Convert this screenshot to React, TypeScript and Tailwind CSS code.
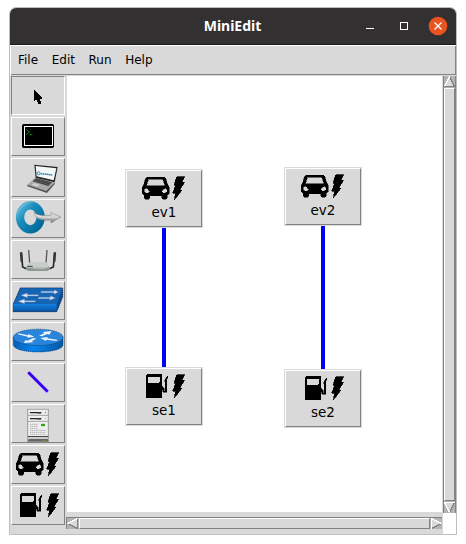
import type { ReactNode } from "react";

const raised = "border border-t-white border-l-white border-r-[#828282] border-b-[#828282]";
const sunken = "border border-t-[#828282] border-l-[#828282] border-r-white border-b-white";

function Bolt() {
  return <path d="M104 2H128L119 19H127L114 42H120L97 72L101 51H92L101 28H96Z" stroke="#000" strokeWidth="2" />;
}

function CarIcon() {
  return (
    <svg width="43" height="24" viewBox="0 0 129 72" shapeRendering="crispEdges" className="block">
      <path
        fillRule="evenodd"
        d="M16 3H66L72 9L77 27L82 34V53L76 57V66L72 70H62L59 65V59H23V65L20 70H10L6 66V57L0 53V34L5 27L10 9ZM20 9L13 29H69L62 9ZM10 37L7 41V48L12 51H19L23 47L17 38ZM72 37L75 41V48L70 51H63L59 47L65 38Z"
        stroke="#000"
        strokeWidth="1.500"
      />
      <Bolt />
    </svg>
  );
}

function PumpIcon() {
  return (
    <svg width="43" height="24" viewBox="0 0 129 72" shapeRendering="crispEdges" className="block">
      <path fillRule="evenodd" d="M16 0H57L61 4V71H12V4ZM18 9V26H51L55 22V9Z" />
      <path
        d="M60 37L66 42V52H70V30L68 20L72 11L77 6V11L74 18V55H62V47H60Z"
        stroke="#000"
        strokeWidth="1.500"
      />
      <Bolt />
    </svg>
  );
}

function Art({ dy, children }: { dy: number; children: ReactNode }) {
  return (
    <svg width="52" height="37" viewBox="1 1 52 37" className="block">
      <g transform={`translate(-11 ${dy}) scale(0.33333)`}>{children}</g>
    </svg>
  );
}

const cursor = (
  <Art dy={-6}>
    <path d="M102 60V94L109 89L115 102H123V96L118 86H126V82Z" shapeRendering="crispEdges" />
  </Art>
);

const terminal = (
  <Art dy={-47}>
    <rect x="66" y="162" width="96" height="72" rx="5" />
    <rect x="73.500" y="169.500" width="84" height="57" fill="none" stroke="#fff" strokeWidth="3" />
    <path d="M79 179L88 186L79 193M89 194H97" fill="none" stroke="#08b80c" strokeWidth="3" strokeDasharray="4 1" />
  </Art>
);

const laptop = (
  <Art dy={-3}>
    <path d="M107 67L163 82L139 110L82 89Z" fill="#a9a9a9" />
    <path d="M82 89L139 108L164 82V87L141 114L82 94Z" fill="#555" />
    <path d="M108 70L156 82L145 93L98 79Z" fill="#3c3c3c" />
    <path d="M106 73L153 85M102 77L149 89" stroke="#777" strokeWidth="1.500" />
    <path d="M101 84L119 89L113 95L95 90Z" fill="#cfcfcf" />
    <path d="M103 29L173 36L164 82L107 68Z" fill="#252525" />
    <path d="M107 33L169 40L161 76L110 64Z" fill="#f3f7fa" />
    <circle cx="116" cy="55" r="4.500" fill="none" stroke="#268bc4" strokeWidth="3" />
    <path d="M122 56L158 60" stroke="#4387ad" strokeWidth="4.500" strokeDasharray="5 1" />
  </Art>
);

const controller = (
  <Art dy={-44}>
    <defs>
      <linearGradient id="ring" x1="0" y1="0" x2="1" y2="1">
        <stop offset="0" stopColor="#5fb8d8" />
        <stop offset=".35" stopColor="#1a8dbd" />
        <stop offset="1" stopColor="#006599" />
      </linearGradient>
      <linearGradient id="silver" x1="0" y1="0" x2="0" y2="1">
        <stop offset="0" stopColor="#fafafa" />
        <stop offset=".55" stopColor="#c0c0c0" />
        <stop offset="1" stopColor="#777" />
      </linearGradient>
    </defs>
    <ellipse cx="91" cy="187" rx="31" ry="36" fill="none" stroke="url(#ring)" strokeWidth="25" />
    <path d="M53 177Q64 145 92 143" fill="none" stroke="#8dd1e6" strokeWidth="2" opacity=".8" />
    <path d="M103 169Q101 184 153 181V173L182 186L153 204V195Q101 200 103 169Z" fill="url(#silver)" stroke="#777" strokeWidth="1.500" />
    <path d="M106 178Q116 190 175 186" fill="none" stroke="#eee" strokeWidth="2" />
  </Art>
);

const router = (
  <Art dy={-5}>
    <path d="M64 52L68 96L79 101M164 52L160 96L148 101" fill="none" stroke="#292929" strokeWidth="5" />
    <path d="M63 52L65 80M165 52L163 80" stroke="#353535" strokeWidth="7" />
    <path d="M86 45L89 84M141 45L138 84" stroke="#555" strokeWidth="4" />
    <path d="M90 82H138L149 98V104L141 108H86L78 104V98Z" fill="#8f9993" />
    <path d="M90 81H138L147 95L141 98H87L80 96Z" fill="#c7ceca" />
    <path d="M82 94H98" stroke="#303532" strokeWidth="3" />
    <path d="M101 101H136" stroke="#c4cac7" strokeWidth="2" />
  </Art>
);

const networkSwitch = (
  <Art dy={-46}>
    <defs>
      <linearGradient id="switchFront" x1="0" y1="0" x2="0" y2="1">
        <stop offset="0" stopColor="#1480e0" />
        <stop offset="1" stopColor="#0755a4" />
      </linearGradient>
    </defs>
    <path d="M61 159H188V185L170 230H40V207Z" fill="#064e91" stroke="#05224a" strokeWidth="3" strokeDasharray="4 2" />
    <path d="M62 160H188L170 207H40Z" fill="#1764b5" />
    <path d="M40 207H170V229H40Z" fill="url(#switchFront)" />
    <path
      d="M124 169H163V164L175 171L162 178V173H122ZM115 183H82V188L63 181L82 174V179H115ZM116 187H151V182L166 189L149 196V191H114ZM105 201H74V206L54 199L74 192V197H107Z"
      fill="#dfe7f2"
      stroke="#4f86bd"
      strokeWidth="1.500"
    />
  </Art>
);

const legacyRouter = (
  <Art dy={-7}>
    <defs>
      <linearGradient id="routerSide" x1="0" y1="0" x2="1" y2="0">
        <stop offset="0" stopColor="#075eb3" />
        <stop offset=".4" stopColor="#0784f0" />
        <stop offset="1" stopColor="#0658a5" />
      </linearGradient>
    </defs>
    <path d="M40 67V89C42 118 187 118 189 89V67Z" fill="url(#routerSide)" stroke="#073866" strokeWidth="2" strokeDasharray="4 2" />
    <ellipse cx="114.500" cy="67" rx="74.500" ry="24.500" fill="#2985dc" stroke="#0a3f73" strokeWidth="2" strokeDasharray="4 2" />
    <path
      d="M56 55L84 61L85 57L103 65L83 68V65L53 58ZM117 62L134 54L127 51L155 48L148 59L142 57L126 64ZM172 74L142 70L143 66L121 69L138 78L139 74L170 78ZM109 71L95 79L101 82L71 84L77 75L83 77L99 69Z"
      fill="#edf2f8"
    />
  </Art>
);

const link = (
  <Art dy={-48}>
    <path d="M88 175L140 227" stroke="#3900f5" strokeWidth="9" strokeLinecap="square" />
  </Art>
);

const host = (
  <Art dy={-9}>
    <rect x="82" y="42" width="64" height="98" fill="#eee" />
    <path d="M83 42V140M145 42V140" stroke="#9b9b9b" strokeWidth="3" />
    <path d="M82 43H146M82 61H146M82 79H146" stroke="#a5a5a5" strokeWidth="3" />
    <path d="M90 53H124M90 71H124" stroke="#222" strokeWidth="4" />
    <path d="M111 55H123M111 73H123" stroke="#777" strokeWidth="4" />
    <path d="M135 52H138" stroke="#c54545" strokeWidth="3" />
    <path d="M135 70H138" stroke="#78c346" strokeWidth="3" />
    <path d="M91 88H114M91 94H114M91 100H114M91 106H138M91 112H138M91 118H138" stroke="#999" strokeWidth="3" strokeDasharray="3 3" />
    <path d="M123 90H135" stroke="#31a916" strokeWidth="7" />
    <path d="M84 125H145" stroke="#222" strokeWidth="3" />
    <path d="M86 131H143L146 140H83Z" fill="#666" />
    <path d="M130 137H135" stroke="#43b629" strokeWidth="4" />
    <path d="M136 137H140" stroke="#c44" strokeWidth="4" />
  </Art>
);

const padded = (icon: ReactNode) => <div className="h-[37px] pl-1 pt-[6px]">{icon}</div>;

const tools: { name: string; icon: ReactNode }[] = [
  { name: "Select", icon: cursor },
  { name: "Host", icon: terminal },
  { name: "Switch", icon: laptop },
  { name: "Controller", icon: controller },
  { name: "AccessPoint", icon: router },
  { name: "LegacySwitch", icon: networkSwitch },
  { name: "LegacyRouter", icon: legacyRouter },
  { name: "NetLink", icon: link },
  { name: "Server", icon: host },
  { name: "EV", icon: padded(<CarIcon />) },
  { name: "SE", icon: padded(<PumpIcon />) },
];

function Node({ place, label, children }: { place: string; label: string; children: ReactNode }) {
  return (
    <div className={`absolute h-[59px] w-[78px] border border-[#d9d9d9] bg-[#d9d9d9] ${place}`}>
      <div className={`flex h-[57px] w-[76px] flex-col pt-[5px] ${raised}`}>
        <div className="ml-[15px]">{children}</div>
        <span className="mt-1 text-center text-[13.5px] leading-4">{label}</span>
      </div>
    </div>
  );
}

function Arrow({ kind }: { kind: "up" | "down" | "left" | "right" }) {
  const points = { up: "M5.5 0L11 11H0Z", down: "M5.5 11L11 0H0Z", left: "M0 5.5L11 0V11Z", right: "M11 5.5L0 0V11Z" }[kind];
  const light = { up: "M5.5 0.5L0.5 10.5", down: "M0 0.5H11M0.5 0.5L5.5 10.5", left: "M0.5 5.5L10.5 0.5", right: "M0.5 11V0.5L10.5 5.5" }[kind];
  const dark = { up: "M5.5 0.5L10.5 10.5H0", down: "M5.5 10.5L10.5 0.5", left: "M0.5 5.5L10.5 10.5V0.5", right: "M10.5 5.5L0.5 10.5" }[kind];
  return (
    <svg width="11" height="11" viewBox="0 0 11 11" className="block shrink-0 bg-[#b3b3b3]" shapeRendering="crispEdges">
      <path d={points} fill="#d9d9d9" />
      <path d={dark} fill="none" stroke="#828282" />
      <path d={light} fill="none" stroke="#fff" strokeWidth="1.500" />
    </svg>
  );
}

export default function App() {
  return (
    <div className="h-[544px] w-[466px] bg-white pl-[9px] pt-[7px] font-['DejaVu_Sans',sans-serif] text-black">
      <div className="flex h-[528px] w-[448px] flex-col overflow-hidden rounded-t-[7px] border border-[#bdbdbd] bg-white">
        <header className="flex h-[37px] shrink-0 items-center border-b border-[#191919] bg-[#333031] text-white">
          <div className="w-[99px]" />
          <h1 className="flex-1 pr-px text-center font-['Noto_Sans',sans-serif] text-[14px] font-bold leading-5">MiniEdit</h1>
          <div className="flex w-[99px] items-center pl-[6px]">
            <svg width="86" height="20" viewBox="0 0 86 20" className="block">
              <path d="M3 12.500H11" stroke="#fff" shapeRendering="crispEdges" />
              <rect x="37.500" y="6.500" width="7" height="7" fill="none" stroke="#fff" shapeRendering="crispEdges" />
              <circle cx="75" cy="10" r="9.300" fill="#e95420" />
              <path d="M71.500 6.500L78.500 13.500M78.500 6.500L71.500 13.500" stroke="#fff" strokeWidth="1.300" />
            </svg>
          </div>
        </header>
        <nav className="ml-px mt-px flex h-[29px] shrink-0 items-center gap-[13.6px] border-b border-r border-[#828282] bg-[#d9d9d9] pl-[7px] text-[12px] leading-4">
          <span>File</span>
          <span>Edit</span>
          <span>Run</span>
          <span>Help</span>
        </nav>
        <main className="flex min-h-0 flex-1 bg-[#d9d9d9] pt-px">
          <aside className="flex w-[57px] shrink-0 flex-col gap-[2px] pl-px">
            {tools.map((tool, i) => (
              <button
                key={tool.name}
                aria-label={tool.name}
                className={`block h-[39px] w-[54px] shrink-0 bg-[#d9d9d9] ${i === 0 ? sunken : raised}`}
              >
                {tool.icon}
              </button>
            ))}
          </aside>
          <div className="flex min-w-0 flex-1 flex-col">
            <div className="relative h-[436px] w-[375px] bg-white">
              <div className="absolute left-[95px] top-[152px] h-[139px] w-[4px] bg-[#0000f5]" />
              <div className="absolute left-[254px] top-[150px] h-[143px] w-[4px] bg-[#0000f5]" />
              <Node place="left-[58px] top-[93px]" label="ev1">
                <CarIcon />
              </Node>
              <Node place="left-[217px] top-[91px]" label="ev2">
                <CarIcon />
              </Node>
              <Node place="left-[58px] top-[291px]" label="se1">
                <PumpIcon />
              </Node>
              <Node place="left-[217px] top-[293px]" label="se2">
                <PumpIcon />
              </Node>
            </div>
            <div className="-ml-px mt-[5px] flex h-[12px] w-[376px] border-l border-t border-[#828282] bg-[#b3b3b3]">
              <Arrow kind="left" />
              <div className={`mx-px flex-1 bg-[#d9d9d9] ${raised}`} />
              <Arrow kind="right" />
            </div>
          </div>
          <div className="w-[13px] shrink-0 bg-white">
            <div className="flex h-[437px] w-[13px] flex-col border-l border-r border-[#828282] bg-[#b3b3b3]">
              <Arrow kind="up" />
              <div className={`my-px w-[11px] flex-1 bg-[#d9d9d9] ${raised}`} />
              <Arrow kind="down" />
            </div>
          </div>
        </main>
      </div>
    </div>
  );
}
